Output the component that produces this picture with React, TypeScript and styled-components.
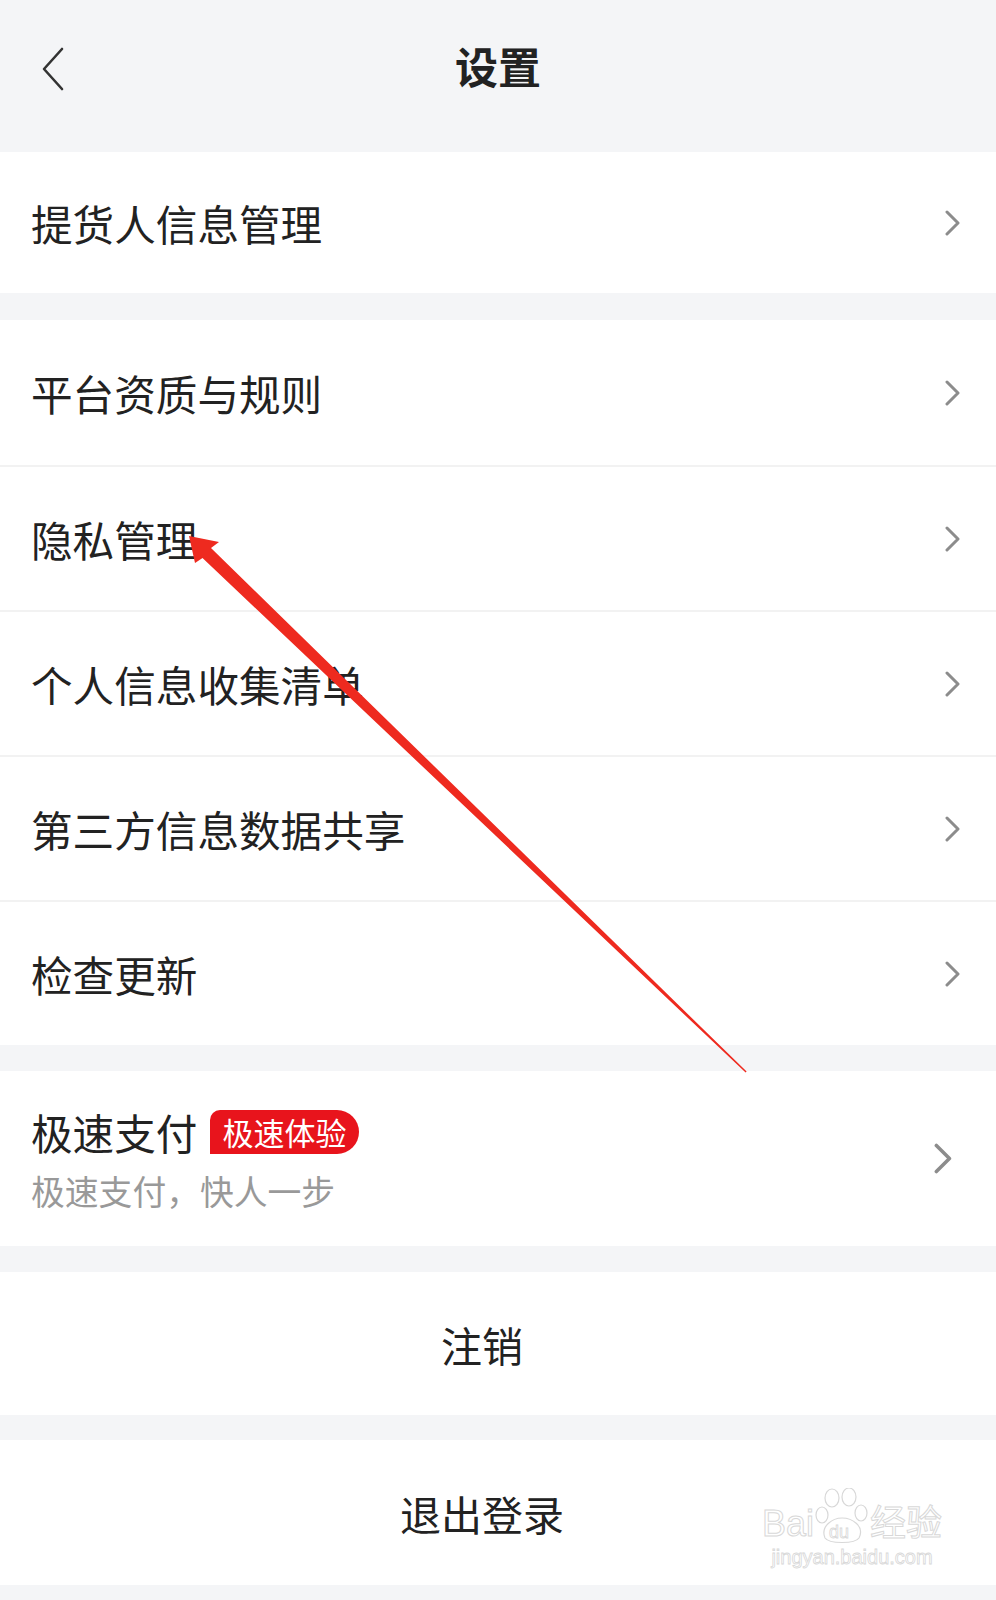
import React from "react";
import styled, { createGlobalStyle } from "styled-components";

const GlobalStyle = createGlobalStyle`
	body {
		margin: 0;
		background: #f4f5f7;
		font-family: "Noto Sans CJK SC", "Noto Sans", sans-serif;
		color: #222;
	}
`;

const Chevron = ({ big }: { big?: boolean }) => (
	<ChevronSvg viewBox="0 0 16 26" $big={big}>
		<polyline points="2,2 13,13 2,24" fill="none" stroke="#8c8c8c" strokeWidth="3" strokeLinecap="round" strokeLinejoin="round" />
	</ChevronSvg>
);

const items = ["平台资质与规则", "隐私管理", "个人信息收集清单", "第三方信息数据共享", "检查更新"];

const App = () => {
	return (
		<Page>
			<GlobalStyle />
			<Header>
				<Back>
					<svg width="24" height="44" viewBox="0 0 24 44">
						<polyline points="21,2 3,22 21,42" fill="none" stroke="#333" strokeWidth="2.6" strokeLinecap="round" strokeLinejoin="round" />
					</svg>
				</Back>
				<Title>设置</Title>
				<span />
			</Header>

			<Group>
				<Row $h={141}>
					<Label>提货人信息管理</Label>
					<Chevron />
				</Row>
			</Group>

			<Group $gap={27}>
				{items.map((t) => (
					<Row key={t} $h={145}>
						<Label>{t}</Label>
						<Chevron />
					</Row>
				))}
			</Group>

			<Group $gap={26}>
				<PayRow>
					<PayText>
						<PayTitle>
							<Label>极速支付</Label>
							<Badge>极速体验</Badge>
						</PayTitle>
						<Sub>极速支付，快人一步</Sub>
					</PayText>
					<Chevron big />
				</PayRow>
			</Group>

			<Group $gap={26}>
				<Action $h={143}>注销</Action>
			</Group>
			<Group $gap={25}>
				<Action $h={145}>退出登录</Action>
			</Group>

			<Overlay viewBox="0 0 996 1600">
				<polygon
					points="189,536 219,542 211,548 746.6,1071.6 745.6,1072.6 202.5,558 195,563"
					fill="#ee2a1f"
				/>
			</Overlay>

			<Watermark>
				<MarkTop>
					<span>Bai</span>
					<svg width="56" height="56" viewBox="0 0 56 56">
						<g fill="#fff" stroke="#d8d8d8" strokeWidth="1.2">
							<ellipse cx="18" cy="10" rx="7" ry="9" />
							<ellipse cx="35" cy="9" rx="7" ry="9" />
							<ellipse cx="8" cy="27" rx="6" ry="8" />
							<ellipse cx="47" cy="25" rx="6" ry="8" />
							<path d="M11 50 C6 38 19 30 28 30 C38 30 51 38 45 50 C41 56 15 56 11 50 Z" />
						</g>
						<text x="15" y="50" fontSize="18" fill="#fff" stroke="#d8d8d8" strokeWidth="0.8" fontFamily="Liberation Sans, sans-serif">du</text>
					</svg>
					<span>经验</span>
				</MarkTop>
				<MarkUrl>jingyan.baidu.com</MarkUrl>
			</Watermark>
		</Page>
	);
};

export default App;

const Page = styled.div`
	position: relative;
	width: 996px;
	min-height: 1600px;
	overflow: hidden;
`;

const Header = styled.header`
	height: 152px;
	display: grid;
	grid-template-columns: 1fr auto 1fr;
	align-items: center;
`;

const Back = styled.div`
	padding-left: 41px;
	display: flex;
	align-items: center;
	margin-top: -15px;
`;

const Title = styled.h1`
	margin: 0;
	font-size: 43px;
	font-weight: 700;
	color: #222;
	margin-top: -22px;
`;

const Group = styled.section<{ $gap?: number }>`
	background: #fff;
	margin-top: ${(p) => p.$gap || 0}px;
`;

const Row = styled.div<{ $h: number }>`
	box-sizing: border-box;
	height: ${(p) => p.$h}px;
	display: flex;
	align-items: center;
	justify-content: space-between;
	padding: 0 35px 0 31px;

	& + & {
		border-top: 2px solid #f2f2f2;
	}
`;

const Label = styled.span`
	font-size: 41.6px;
	line-height: 48px;
	color: #222;
`;

const ChevronSvg = styled.svg<{ $big?: boolean }>`
	width: ${(p) => (p.$big ? "19px" : "16px")};
	height: ${(p) => (p.$big ? "31px" : "26px")};
	flex: none;
`;

const PayRow = styled.div`
	height: 175px;
	box-sizing: border-box;
	display: flex;
	align-items: center;
	justify-content: space-between;
	padding: 0 43px 0 31px;
`;

const PayText = styled.div`
	display: flex;
	flex-direction: column;
	gap: 15px;
	margin-top: 1px;
`;

const PayTitle = styled.div`
	display: flex;
	align-items: center;
	gap: 13px;
`;

const Badge = styled.span`
	background: #e8141c;
	color: #fff;
	font-size: 31px;
	line-height: 44px;
	height: 44px;
	padding: 0 13px 0 12px;
	border-radius: 10px 22px 22px 0;
`;

const Sub = styled.span`
	font-size: 33.8px;
	line-height: 40px;
	color: #999;
`;

const Action = styled.div<{ $h: number }>`
	height: ${(p) => p.$h}px;
	display: flex;
	align-items: center;
	justify-content: center;
	padding-right: 32px;
	font-size: 41px;
	color: #222;
`;

const Overlay = styled.svg`
	position: absolute;
	top: 0;
	left: 0;
	width: 996px;
	height: 1600px;
	pointer-events: none;
`;

const Watermark = styled.div`
	position: absolute;
	left: 762px;
	top: 1488px;
	display: flex;
	flex-direction: column;
	align-items: center;
	pointer-events: none;
`;

const MarkTop = styled.div`
	display: flex;
	align-items: flex-end;
	font-family: "Liberation Sans", "Noto Sans CJK SC", sans-serif;
	font-size: 36px;
	line-height: 40px;
	color: #fff;
	-webkit-text-stroke: 1px #d8d8d8;
`;

const MarkUrl = styled.div`
	font-family: "Liberation Sans", sans-serif;
	font-size: 20px;
	color: #fff;
	-webkit-text-stroke: 0.8px #d8d8d8;
	margin-top: 2px;
`;
